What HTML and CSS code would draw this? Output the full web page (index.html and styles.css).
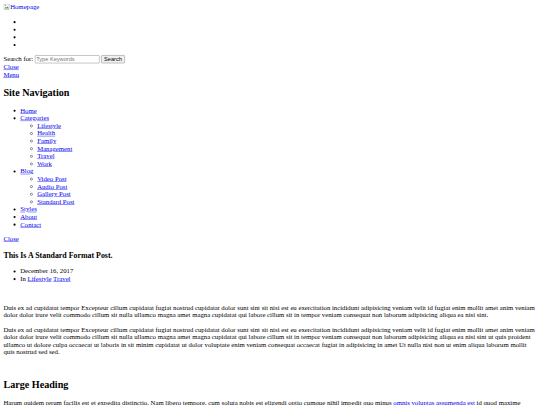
FILE: index.html
```html
<!DOCTYPE html>
<html lang="en">
<head>
<meta charset="utf-8">
<title>This Is A Standard Format Post.</title>
<link rel="stylesheet" href="styles.css">
</head>
<body>
<div class="page">
<header class="site-header">
  <div class="logo">
    <a href="#"><span class="broken"><svg class="broken-icon" viewBox="0 0 16 16" width="16" height="16"><rect x="1.5" y="1.5" width="12" height="13" fill="#fff" stroke="#8a8a8a"/><path d="M3 12 L6 8 L8 10 L10 7 L13 12 Z" fill="#5a9c3a"/><circle cx="5" cy="5" r="1.5" fill="#6aa4d8"/></svg>Homepage</span></a>
  </div>
  <ul class="social">
    <li></li>
    <li></li>
    <li></li>
    <li></li>
  </ul>
  <form class="search">
    <label>Search for: <input type="search" class="search-field" placeholder="Type Keywords"></label>
    <input type="submit" class="search-submit" value="Search">
  </form>
  <a href="#" class="close-link">Close</a>
  <br>
  <a href="#" class="menu-link">Menu</a>
  <nav class="site-nav">
    <h2>Site Navigation</h2>
    <ul>
      <li><a href="#">Home</a></li>
      <li><a href="#">Categories</a>
        <ul>
          <li><a href="#">Lifestyle</a></li>
          <li><a href="#">Health</a></li>
          <li><a href="#">Family</a></li>
          <li><a href="#">Management</a></li>
          <li><a href="#">Travel</a></li>
          <li><a href="#">Work</a></li>
        </ul>
      </li>
      <li><a href="#">Blog</a>
        <ul>
          <li><a href="#">Video Post</a></li>
          <li><a href="#">Audio Post</a></li>
          <li><a href="#">Gallery Post</a></li>
          <li><a href="#">Standard Post</a></li>
        </ul>
      </li>
      <li><a href="#">Styles</a></li>
      <li><a href="#">About</a></li>
      <li><a href="#">Contact</a></li>
    </ul>
    <a href="#" class="close-link">Close</a>
  </nav>
</header>
<article class="post">
  <h3 class="post-title">This Is A Standard Format Post.</h3>
  <ul class="post-meta">
    <li>December 16, 2017</li>
    <li>In <a href="#">Lifestyle</a> <a href="#">Travel</a></li>
  </ul>
  <p>&nbsp;</p>
  <p>Duis ex ad cupidatat tempor Excepteur cillum cupidatat fugiat nostrud cupidatat dolor sunt sint sit nisi est eu exercitation incididunt adipisicing veniam velit id fugiat enim mollit amet anim veniam dolor dolor irure velit commodo cillum sit nulla ullamco magna amet magna cupidatat qui labore cillum sit in tempor veniam consequat non laborum adipisicing aliqua ea nisi sint.</p>
  <p>Duis ex ad cupidatat tempor Excepteur cillum cupidatat fugiat nostrud cupidatat dolor sunt sint sit nisi est eu exercitation incididunt adipisicing veniam velit id fugiat enim mollit amet anim veniam dolor dolor irure velit commodo cillum sit nulla ullamco magna amet magna cupidatat qui labore cillum sit in tempor veniam consequat non laborum adipisicing aliqua ea nisi sint ut quis proident ullamco ut dolore culpa occaecat ut laboris in sit minim cupidatat ut dolor voluptate enim veniam consequat occaecat fugiat in adipisicing in amet Ut nulla nisi non ut enim aliqua laborum mollit quis nostrud sed sed.</p>
  <p>&nbsp;</p>
  <h2>Large Heading</h2>
  <p>Harum quidem rerum facilis est et expedita distinctio. Nam libero tempore, cum soluta nobis est eligendi optio cumque nihil impedit quo minus <a href="#">omnis voluptas assumenda est</a> id quod maxime placeat facere possimus, omnis dolor repellendus. Temporibus autem quibusdam et aut officiis debitis aut rerum necessitatibus saepe eveniet ut et voluptates repudiandae sint et molestiae non recusandae.</p>
</article>
</div>
</body>
</html>
```

FILE: styles.css
```css
html,
body {
  margin: 0;
  padding: 0;
  overflow: hidden;
  background: #fff;
}

body {
  width: 540px;
  height: 405px;
}

.page {
  width: 1280px;
  padding: 8px;
  box-sizing: border-box;
  transform: scale(0.421875);
  transform-origin: 0 0;
  font-family: "Liberation Serif", "Times New Roman", serif;
  font-size: 16px;
  color: #000;
}

a {
  color: #0000ee;
}

.logo {
  line-height: 16px;
}

.broken {
  display: inline-flex;
  align-items: flex-end;
}

.broken-icon {
  width: 16px;
  height: 16px;
}

.search {
  margin: 0;
}

.search-field,
.search-submit {
  font-family: "Liberation Sans", Arial, sans-serif;
  font-size: 13.333px;
}

.search-field {
  width: 153px;
  padding: 1px 2px;
  border: 1px solid #767676;
  border-radius: 2px;
}

.search-field::placeholder {
  color: #757575;
}

.search-submit {
  padding: 1px 6px;
  border: 1px solid #767676;
  border-radius: 2px;
  background: #efefef;
  color: #000;
}

.site-nav h2 {
  font-size: 24px;
}
```
